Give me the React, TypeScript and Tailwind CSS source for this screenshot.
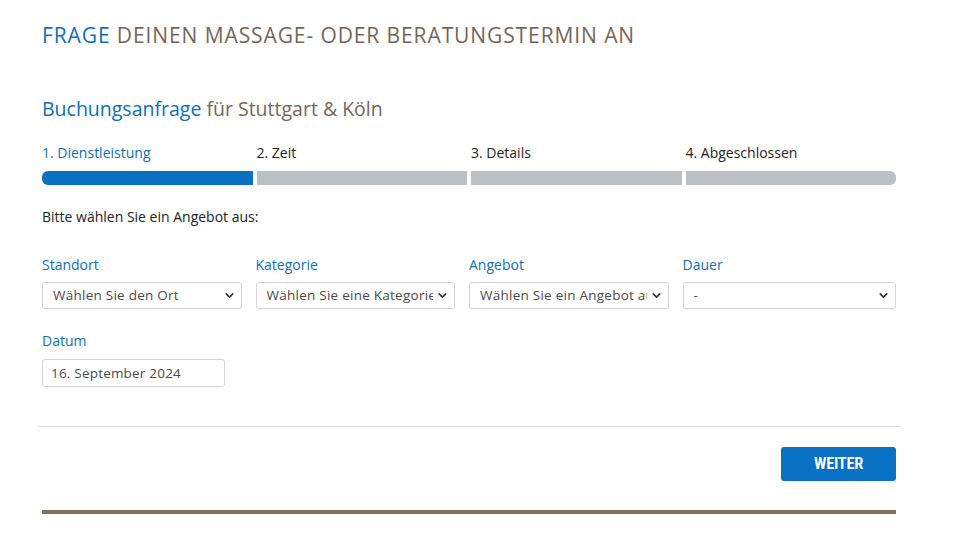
import { ChevronDown } from "lucide-react";

const steps = ["1. Dienstleistung", "2. Zeit", "3. Details", "4. Abgeschlossen"];

const fields = [
  { label: "Standort", value: "Wählen Sie den Ort" },
  { label: "Kategorie", value: "Wählen Sie eine Kategorie" },
  { label: "Angebot", value: "Wählen Sie ein Angebot aus" },
  { label: "Dauer", value: "-" },
];

const SelectBox = ({ value }: { value: string }) => (
  <div className="flex h-[27px] items-center rounded-[3px] border border-[#d5d5d5] bg-white pl-[10px] pr-[5px] shadow-[0_1px_1px_rgba(0,0,0,0.04)]">
    <span className="flex-1 overflow-hidden whitespace-nowrap text-[13.5px] tracking-[0.25px] text-[#4a4a4a]">
      {value}
    </span>
    <ChevronDown size={13} strokeWidth={3} className="ml-[3px] shrink-0 text-[#333]" />
  </div>
);

const App = () => {
  return (
    <div className="min-h-screen bg-white [font-family:'Open_Sans',sans-serif]">
      <div className="mx-[42px] w-[854px] pt-[21px]">
        <h1 className="text-[21px] leading-[28px] tracking-[0.9px] text-[#76665a]">
          <span className="text-[#0a70c0]">FRAGE</span> DEINEN MASSAGE- ODER BERATUNGSTERMIN AN
        </h1>

        <h2 className="mt-[47px] text-[19.5px] leading-[26px] text-[#76665a]">
          <span className="text-[#0a70c0]">Buchungsanfrage</span> für Stuttgart &amp; Köln
        </h2>

        <div className="mt-[21px] grid grid-cols-4 gap-[4px]">
          {steps.map((s, i) => (
            <div key={s}>
              <div className={`text-[14px] leading-[20px] ${i === 0 ? "text-[#0a70c0]" : "text-[#222]"}`}>
                {s}
              </div>
              <div
                className={`mt-[8px] h-[14px] ${i === 0 ? "rounded-l-[6px] bg-[#0a70c0]" : "bg-[#bcc0c4]"} ${
                  i === 3 ? "rounded-r-[6px]" : ""
                }`}
              />
            </div>
          ))}
        </div>

        <p className="mt-[22px] text-[14px] leading-[20px] text-[#222]">Bitte wählen Sie ein Angebot aus:</p>

        <div className="mt-[28px] grid grid-cols-4">
          {fields.map((f, i) => (
            <div key={f.label} className={i === 3 ? "" : "pr-[14px]"}>
              <div className="text-[14px] leading-[20px] text-[#0a70c0]">{f.label}</div>
              <div className="mt-[7px]">
                <SelectBox value={f.value} />
              </div>
            </div>
          ))}
        </div>

        <div className="mt-[22px]">
          <div className="text-[14px] leading-[20px] text-[#0a70c0]">Datum</div>
          <div className="mt-[8px] flex h-[28px] w-[183px] items-center rounded-[3px] border border-[#d5d5d5] bg-white px-[8px] text-[13.5px] tracking-[0.2px] text-[#4a4a4a]">
            16. September 2024
          </div>
        </div>
      </div>

      <div className="mx-[38px] mt-[39px] w-[862px] border-t border-[#dcdcdc]" />

      <div className="mx-[42px] w-[854px]">
        <div className="mt-[20px] flex justify-end">
          <button className="h-[34px] w-[115px] rounded-[3px] bg-[#0a72c4] text-[16.5px] font-semibold tracking-[-0.3px] text-white [font-family:'Roboto_Condensed','Open_Sans',sans-serif]">
            WEITER
          </button>
        </div>
        <div className="mt-[29px] h-[4px] bg-[#85705e]" />
      </div>
    </div>
  );
};

export default App;
